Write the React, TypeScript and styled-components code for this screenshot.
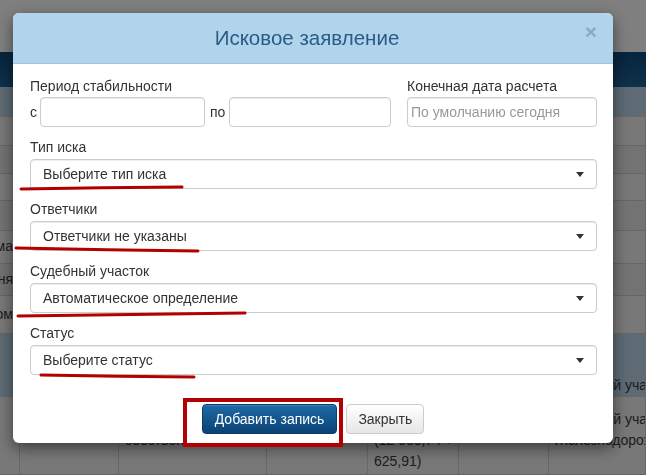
import * as React from "react";
import styled, {createGlobalStyle} from "styled-components";

const GlobalStyle = createGlobalStyle`
  html, body {
    margin: 0;
    padding: 0;
    overflow: hidden;
  }
  body {
    font-family: "Liberation Sans", Arial, sans-serif;
    font-size: 14px;
    color: #333;
  }
  * {
    box-sizing: border-box;
  }
`;

// --- page behind the dialog ---

const Page = styled.div`
  width: 646px;
  height: 475px;
  background: #fff;
  display: flex;
  flex-direction: column;
`;

const TopBar = styled.div`
  height: 53px;
  background: #fff;
`;

const NavBar = styled.div`
  height: 36px;
  background: linear-gradient(180deg, #0f497c 0%, #1b6298 100%);
`;

const Row = styled.div<{h: number; head?: boolean; shade?: boolean}>`
  display: flex;
  height: ${p => p.h}px;
  background: ${p => (p.head ? "#bcd5e8" : p.shade ? "#e6e6e6" : "#f0f0f0")};
  border-bottom: 1px solid #cdcdcd;
`;

const Cell = styled.div<{w: number; end?: boolean; bottom?: boolean}>`
  width: ${p => p.w}px;
  flex-shrink: 0;
  overflow: hidden;
  white-space: nowrap;
  border-right: 1px solid #cfcfcf;
  display: flex;
  flex-direction: column;
  justify-content: ${p => (p.bottom ? "flex-end" : "center")};
  align-items: ${p => (p.end ? "flex-end" : "flex-start")};
  padding: ${p => (p.end ? "0 6px 0 0" : "0 0 0 6px")};
  color: #3a3a3a;
  line-height: 21px;
`;

const DataCell = styled(Cell)`
  justify-content: flex-start;
  padding-top: 33px;
`;

const WideDataCell = styled(DataCell)`
  padding-top: 12px;
`;

const cols = [20, 99, 148, 101, 91, 90, 97];

const SideRow = ({h, text, shade}: {h: number; text?: string; shade?: boolean}) => (
    <Row h={h} shade={shade}>
        <Cell w={cols[0]} end>{text}</Cell>
        {cols.slice(1).map((w, i) => <Cell key={i} w={w}/>)}
    </Row>
);

const Backdrop = styled.div`
  position: fixed;
  inset: 0;
  background: rgba(0, 0, 0, 0.5);
`;

// --- dialog ---

const Modal = styled.div`
  position: fixed;
  left: 13px;
  top: 13px;
  width: 600px;
  height: 430px;
  background: #fff;
  border-radius: 6px;
  box-shadow: 0 5px 15px rgba(0, 0, 0, 0.5);
  display: flex;
  flex-direction: column;
`;

const Header = styled.div`
  position: relative;
  height: 51px;
  background: #b0d4ec;
  border-bottom: 1px solid #9ec5e0;
  border-radius: 6px 6px 0 0;
  display: flex;
  align-items: center;
  justify-content: center;
`;

const Title = styled.div`
  font-size: 20.5px;
  color: #2b5b84;
  margin-left: -12px;
`;

const Close = styled.span`
  position: absolute;
  right: 16px;
  top: 8px;
  font-size: 21px;
  font-weight: bold;
  color: #000;
  opacity: 0.2;
  line-height: 21px;
`;

const Body = styled.div`
  padding: 12px 16px 0 17px;
`;

const TopRow = styled.div`
  display: flex;
  gap: 16px;
  margin-bottom: 10px;
`;

const Group = styled.div<{w?: number}>`
  display: flex;
  flex-direction: column;
  ${p => (p.w ? `width: ${p.w}px;` : "flex: 1;")}
`;

const Label = styled.div`
  height: 20px;
  line-height: 20px;
  margin-bottom: 1px;
`;

const Range = styled.div`
  display: flex;
  align-items: center;
`;

const Word = styled.span<{gap: number; pad?: number}>`
  width: ${p => p.gap}px;
  padding-left: ${p => p.pad ?? 0}px;
  flex-shrink: 0;
`;

const Input = styled.div<{w?: number}>`
  height: 30px;
  ${p => (p.w ? `width: ${p.w}px;` : "flex: 1;")}
  border: 1px solid #ccc;
  border-radius: 4px;
  box-shadow: inset 0 1px 1px rgba(0, 0, 0, 0.075);
  color: #999;
  padding: 0 3px;
  line-height: 28px;
`;

const Field = styled.div`
  display: flex;
  flex-direction: column;
  margin-bottom: 10px;
`;

const SelectLabel = styled(Label)`
  margin-bottom: 2px;
`;

const Select = styled.div`
  height: 30px;
  border: 1px solid #ccc;
  border-radius: 4px;
  box-shadow: inset 0 1px 1px rgba(0, 0, 0, 0.075);
  display: flex;
  align-items: center;
  justify-content: space-between;
  padding: 0 12px 0 12px;
  color: #333;
`;

const Caret = styled.span`
  width: 0;
  height: 0;
  border-left: 4px solid transparent;
  border-right: 4px solid transparent;
  border-top: 5px solid #333;
`;

const Footer = styled.div`
  display: flex;
  justify-content: center;
  gap: 9px;
  padding: 19px 17px 8px;
`;

const Button = styled.div<{primary?: boolean}>`
  height: 30px;
  padding: 0 ${p => (p.primary ? 12 : 11)}px;
  border-radius: 4px;
  display: flex;
  align-items: center;
  border: 1px solid ${p => (p.primary ? "#0a3a66" : "#ccc")};
  color: ${p => (p.primary ? "#fff" : "#333")};
  background: ${p => (p.primary
      ? "linear-gradient(180deg, #1d6aa6 0%, #0b4275 100%)"
      : "linear-gradient(180deg, #fff 0%, #e6e6e6 100%)")};
  box-shadow: ${p => (p.primary ? "inset 0 1px 0 rgba(255,255,255,.15)" : "none")};
`;

const Marks = styled.svg`
  position: absolute;
  left: 0;
  top: 0;
  overflow: visible;
  pointer-events: none;
`;

const selects = [
    {label: "Тип иска", value: "Выберите тип иска"},
    {label: "Ответчики", value: "Ответчики не указаны"},
    {label: "Судебный участок", value: "Автоматическое определение"},
    {label: "Статус", value: "Выберите статус"},
];

// red annotation strokes, in dialog coordinates
const underlines = [
    "M8 176 Q 90 174.5 169 174",
    "M3 235 Q 95 237 185 238",
    "M5 303 Q 120 301 232 300",
    "M28 362 Q 105 363.5 181 364",
];

export default function App() {
    return <>
        <GlobalStyle/>
        <Page>
            <TopBar/>
            <NavBar/>
            <Row h={30} head>
                {cols.map((w, i) => <Cell key={i} w={w}/>)}
            </Row>
            <SideRow h={30}/>
            <SideRow h={28} shade/>
            <SideRow h={28}/>
            <SideRow h={30} shade/>
            <SideRow h={34} text="Сумма"/>
            <SideRow h={33} text="Пеня" shade/>
            <SideRow h={38} text="Ответчиком"/>
            <Row h={64} head>
                {cols.map((w, i) => <Cell key={i} w={w} bottom>{i === 6 ? "Судебный участок" : ""}</Cell>)}
            </Row>
            <Row h={80}>
                <DataCell w={cols[0]}/>
                <DataCell w={cols[1]}/>
                <DataCell w={cols[2]}><span>собственн...</span></DataCell>
                <DataCell w={cols[3]}><span>46,07</span></DataCell>
                <DataCell w={cols[4]}><span>(12 660,74 +</span><span>625,91)</span></DataCell>
                <DataCell w={cols[5]}/>
                <WideDataCell w={cols[6]}><span>Судебный участок</span><span>Железнодорожного</span></WideDataCell>
            </Row>
        </Page>
        <Backdrop/>
        <Modal>
            <Header>
                <Title>Исковое заявление</Title>
                <Close>×</Close>
            </Header>
            <Body>
                <TopRow>
                    <Group>
                        <Label>Период стабильности</Label>
                        <Range>
                            <Word gap={10}>с</Word>
                            <Input w={165}/>
                            <Word gap={24} pad={5}>по</Word>
                            <Input/>
                        </Range>
                    </Group>
                    <Group w={190}>
                        <Label>Конечная дата расчета</Label>
                        <Input>По умолчанию сегодня</Input>
                    </Group>
                </TopRow>
                {selects.map(s => (
                    <Field key={s.label}>
                        <SelectLabel>{s.label}</SelectLabel>
                        <Select>
                            <span>{s.value}</span>
                            <Caret/>
                        </Select>
                    </Field>
                ))}
            </Body>
            <Footer>
                <Button primary>Добавить запись</Button>
                <Button>Закрыть</Button>
            </Footer>
            <Marks width="600" height="430">
                {underlines.map((d, i) => (
                    <path key={i} d={d} fill="none" stroke="#b30000" strokeWidth="3" strokeLinecap="round"/>
                ))}
                <rect x="172" y="387" width="156" height="45" fill="none" stroke="#b30000" strokeWidth="4"/>
            </Marks>
        </Modal>
    </>;
}
